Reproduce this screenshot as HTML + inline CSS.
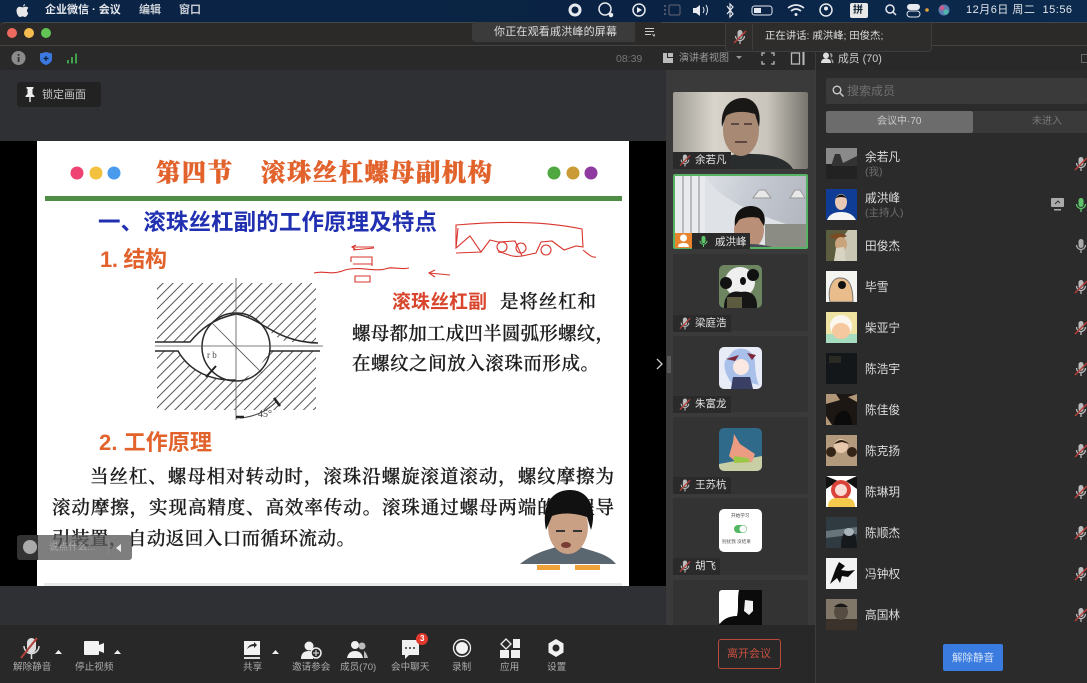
<!DOCTYPE html>
<html><head><meta charset="utf-8"><style>
*{box-sizing:border-box}html,body{margin:0;padding:0}
body{width:1087px;height:683px;overflow:hidden;position:relative;background:#282828;font-family:"Liberation Sans","Noto Sans CJK SC",sans-serif;color:#ddd}
.a{position:absolute}.t{position:absolute;white-space:nowrap;line-height:14px}
.tile{position:absolute;left:673px;width:135px;background:#333;border-radius:2px;overflow:hidden}
.tag{position:absolute;left:673px;height:17px;background:#2a2a2a}
.n{position:absolute;left:695px;font-size:10.5px;line-height:14px;color:#e2e2e2;white-space:nowrap}
.m{position:absolute;left:865px;font-size:11.7px;line-height:16px;color:#ddd;white-space:nowrap;margin-top:1px}
.s{position:absolute;left:865px;font-size:10.5px;line-height:13px;color:#6e6e6e;white-space:nowrap;margin-top:1px}
.av{position:absolute;left:826px;width:31px;height:31px;overflow:hidden}
.lb{position:absolute;top:661px;font-size:9.6px;line-height:13px;color:#aaa;white-space:nowrap}
</style></head><body>
<svg width="0" height="0" style="position:absolute"><defs>
<symbol id="mm" viewBox="0 0 14 16"><rect x="4.5" y="1" width="5" height="9" rx="2.5" fill="#bbb"/><path d="M2.5 7a4.5 4.5 0 0 0 9 0M7 11.5V15" stroke="#bbb" fill="none" stroke-width="1.3"/><path d="M1 14L13 2" stroke="#b8403c" stroke-width="1.5"/></symbol>
<symbol id="mu" viewBox="0 0 14 16"><rect x="4.5" y="1" width="5" height="9" rx="2.5" fill="currentColor"/><path d="M2.5 7a4.5 4.5 0 0 0 9 0M7 11.5V15" stroke="currentColor" fill="none" stroke-width="1.3"/></symbol>
<pattern id="hh" width="7" height="7" patternUnits="userSpaceOnUse" patternTransform="rotate(-45)"><rect width="7" height="1" fill="#555"/></pattern>
</defs></svg>

<!-- menu bar -->
<div class="a" style="left:0;top:0;width:1087px;height:22px;background:linear-gradient(90deg,#0b2546,#0a2344 60%,#0b2a4e)"></div>
<svg class="a" style="left:16px;top:3px" width="13" height="15" viewBox="0 0 13 15"><path d="M9 1C8 1.300 7 2.300 7 3.500 8.200 3.500 9.200 2.400 9 1ZM6.500 4.300C5.500 4.300 4.800 3.700 3.700 3.700 2 3.700.5 5.200.5 7.700c0 3 2 6.300 3.500 6.300.9 0 1.400-.6 2.500-.6s1.500.6 2.500.6c1.400 0 2.700-2.300 3.300-4-1.500-.7-2-3.900.2-5-.7-1-1.800-1.400-2.800-1.400-1.200 0-2 .7-2.700.7Z" fill="#e8e8e8"/></svg>
<div class="t" style="left:45px;top:3px;font-size:11px;font-weight:700;color:#e6e9ee">企业微信 · 会议</div>
<div class="t" style="left:139px;top:3px;font-size:11px;font-weight:700;color:#c9ced6">编辑</div>
<div class="t" style="left:179px;top:3px;font-size:11px;font-weight:700;color:#c9ced6">窗口</div>
<svg class="a" style="left:560px;top:0" width="400" height="22" fill="none" stroke="#e6e9ee" stroke-width="1.500">
<circle cx="15" cy="10" r="5" stroke-width="3"/>
<circle cx="45" cy="9" r="6"/><circle cx="51" cy="15" r="1.500" fill="#e6e9ee"/>
<circle cx="79" cy="10" r="6"/><path d="M77 7l5 3-5 3z" fill="#e6e9ee" stroke="none"/>
<rect x="109" y="5" width="11" height="10" rx="1.500" stroke="#667" stroke-width="1"/><path d="M104 6h2M104 10h2M104 14h2" stroke="#667"/>
<path d="M133 8h3l4-3v11l-4-3h-3z" fill="#e6e9ee" stroke="none"/><path d="M143 7q2 3 0 6M146 5q3 5 0 10" stroke-width="1"/>
<path d="M167 6l6 8-3 3V4l3 3-6 7" stroke-width="1.200"/>
<rect x="192" y="6" width="20" height="9" rx="2.500" stroke-width="1"/><rect x="194" y="8" width="7" height="5" fill="#e6e9ee" stroke="none"/>
<path d="M228 8q8-6 16 0M231 11q5-4 10 0" stroke-width="1.700"/><circle cx="236" cy="14.500" r="1.500" fill="#e6e9ee" stroke="none"/>
<circle cx="266" cy="10" r="6"/><circle cx="266" cy="8.500" r="2" fill="#e6e9ee" stroke="none"/>
<rect x="290" y="3" width="18" height="15" rx="2" fill="#e8e8e8" stroke="none"/>
<circle cx="330" cy="9" r="4"/><path d="M333 12l3 3"/>
<rect x="347" y="4" width="13" height="6" rx="3" fill="#e6e9ee" stroke="none"/><rect x="347" y="11" width="13" height="6" rx="3" stroke-width="1"/>
<circle cx="367" cy="10" r="1.800" fill="#e2a33a" stroke="none"/>
<circle cx="384" cy="10" r="5.500" fill="#5a7fb0" stroke="none"/><circle cx="382" cy="8" r="2.500" fill="#c75b8a" stroke="none"/><circle cx="386" cy="12" r="2.500" fill="#4fb7a8" stroke="none"/>
</svg>
<div class="t" style="left:853px;top:4px;font-size:10px;font-weight:700;color:#123">拼</div>
<div class="t" style="left:966px;top:3px;font-size:11px;color:#e2e6ec;letter-spacing:.5px">12月6日 周二&nbsp; 15:56</div>

<!-- window -->
<div class="a" style="left:0;top:22px;width:1087px;height:24px;background:#2c2a28;border-top:1px solid #43464a;border-bottom:1px solid #444;border-radius:6px 0 0 0"></div>
<div class="a" style="left:7px;top:28px;width:10px;height:10px;border-radius:5px;background:#ee6a5e"></div>
<div class="a" style="left:24px;top:28px;width:10px;height:10px;border-radius:5px;background:#f5bd4f"></div>
<div class="a" style="left:41px;top:28px;width:10px;height:10px;border-radius:5px;background:#61c454"></div>
<div class="a" style="left:472px;top:22px;width:163px;height:20px;background:#3b3b3b;border-radius:4px 0 0 4px"></div>
<div class="a" style="left:635px;top:22px;width:26px;height:20px;background:#2c2a28"></div>
<div class="t" style="left:494px;top:25px;font-size:11px;color:#dedede;letter-spacing:.2px">你正在观看戚洪峰的屏幕</div>
<svg class="a" style="left:644px;top:27px" width="11" height="10" stroke="#ccc" stroke-width="1"><path d="M1 1.500h9M1 4.500h9M1 7.500h6"/><path d="M8.500 7l1.500 2 1-2" /></svg>

<div class="a" style="left:0;top:46px;width:815px;height:24px;background:#292929"></div>
<div class="a" style="left:815px;top:46px;width:272px;height:24px;background:#292929"></div>
<svg class="a" style="left:11px;top:50px" width="50" height="16"><circle cx="7.500" cy="8" r="7" fill="#8b8b8b"/><rect x="6.700" y="7" width="1.800" height="5" fill="#333"/><rect x="6.700" y="4" width="1.800" height="1.800" fill="#333"/><path d="M35 2l6 1.500V9c0 3-3 5-6 6-3-1-6-3-6-6V3.500z" fill="#3b78e0"/><path d="M35 6v5M32.500 8.500h5" stroke="#123" stroke-width="1.200"/></svg>
<svg class="a" style="left:66px;top:52px" width="14" height="13" fill="#3fa14a"><rect x="1" y="8" width="2" height="3.500"/><rect x="5" y="5" width="2" height="6.500"/><rect x="9" y="1.500" width="2" height="10"/></svg>
<div class="t" style="left:616px;top:52px;font-size:10.5px;color:#777">08:39</div>
<svg class="a" style="left:662px;top:52px" width="12" height="12"><path d="M1 1h4v5h6v5H1z" fill="#bbb"/><rect x="6" y="1" width="5" height="4" fill="#bbb"/></svg>
<div class="t" style="left:679px;top:52px;font-size:10px;color:#9b9b9b">演讲者视图</div>
<div class="a" style="left:736px;top:56px;border:3px solid transparent;border-top:3px solid #999"></div>
<svg class="a" style="left:761px;top:52px" width="14" height="13" stroke="#bbb" fill="none" stroke-width="1.300"><path d="M1 4V1h3M10 1h3v3M13 9v3h-3M4 12H1V9"/></svg>
<svg class="a" style="left:790px;top:52px" width="16" height="13" stroke="#bbb" fill="none" stroke-width="1.300"><rect x="1.500" y="1" width="8" height="11"/><path d="M13.500 0v13" stroke-width="2"/></svg>
<div class="a" style="left:815px;top:46px;width:1px;height:637px;background:#3c3c3c"></div>
<svg class="a" style="left:821px;top:52px" width="13" height="12" fill="#ddd"><circle cx="5" cy="3.500" r="3"/><path d="M0 11c0-3 2-4.500 5-4.500s5 1.500 5 4.500z"/><path d="M9 1a2.500 2.500 0 0 1 0 5c2 .5 3.500 2 3.500 5H11" fill="#999"/></svg>
<div class="t" style="left:838px;top:52px;font-size:10.8px;color:#ccc">成员 (70)</div>
<div class="a" style="left:1081px;top:54px;width:6px;height:9px;border:1px solid #666;border-right:0"></div>

<!-- stage -->
<div class="a" style="left:0;top:70px;width:666px;height:555px;background:#2e3033"></div>
<div class="a" style="left:0;top:141px;width:666px;height:445px;background:#000"></div>
<div class="a" style="left:666px;top:70px;width:149px;height:555px;background:#3a3a3a"></div>
<div class="a" style="left:17px;top:82px;width:84px;height:25px;background:#222;border-radius:3px"></div>
<svg class="a" style="left:24px;top:86px" width="12" height="17" fill="#eee"><path d="M2.500 1h7v1.500L8.500 3v5l2 2v1H6.700v5h-1.400v-5H1.500v-1l2-2V3L2.500 2.500z"/></svg>
<div class="t" style="left:42px;top:88px;font-size:11px;color:#c8c8c8">锁定画面</div>

<!-- slide -->
<svg class="a" style="left:0;top:0;filter:blur(.35px)" width="666" height="683" viewBox="0 0 666 683" font-family="'Liberation Sans','Noto Sans CJK SC',sans-serif">
<rect x="37" y="141" width="592" height="445" fill="#fff"/>
<rect x="44" y="583" width="578" height="3" fill="#e8e8e8"/>
<g><circle cx="77" cy="173" r="6.500" fill="#ee4272"/><circle cx="96" cy="173" r="6.500" fill="#f2c23e"/><circle cx="114" cy="173" r="6.500" fill="#4a9aee"/><circle cx="554" cy="173" r="6.500" fill="#4fa83f"/><circle cx="573" cy="173" r="6.500" fill="#c99a35"/><circle cx="591" cy="173" r="6.500" fill="#8e3aa0"/></g>
<g font-family="'Liberation Serif','Noto Serif CJK SC',serif" font-weight="900" fill="#e2622c" stroke="#e2622c" stroke-width=".4" font-size="24.500">
<text x="156" y="181" textLength="76" lengthAdjust="spacing">第四节</text>
<text x="261" y="181" textLength="231" lengthAdjust="spacing">滚珠丝杠螺母副机构</text></g>
<rect x="45" y="196" width="577" height="5" fill="#4f8c45"/>
<text x="98" y="230" font-size="22.500" font-weight="700" fill="#2030b0" textLength="339" lengthAdjust="spacing">一、滚珠丝杠副的工作原理及特点</text>
<text x="100" y="267" font-size="22" font-weight="700" fill="#e2622c" textLength="67" lengthAdjust="spacing">1. 结构</text>
<text x="99" y="450" font-size="22" font-weight="700" fill="#e2622c" textLength="113" lengthAdjust="spacing">2. 工作原理</text>
<text x="392" y="308" font-size="18.800" font-weight="700" fill="#d8452c" textLength="95" lengthAdjust="spacing">滚珠丝杠副</text>
<g font-family="'Liberation Serif','Noto Serif CJK SC',serif" font-size="18.500" font-weight="500" fill="#1c1c1c" stroke="#1c1c1c" stroke-width=".3">
<text x="500" y="308" textLength="96" lengthAdjust="spacing">是将丝杠和</text>
<text x="352" y="340" textLength="262" lengthAdjust="spacing">螺母都加工成凹半圆弧形螺纹，</text>
<text x="352" y="370" textLength="247" lengthAdjust="spacing">在螺纹之间放入滚珠而形成。</text>
<text x="90" y="483" textLength="524" lengthAdjust="spacing">当丝杠、螺母相对转动时，滚珠沿螺旋滚道滚动，螺纹摩擦为</text>
<text x="52" y="514" textLength="562" lengthAdjust="spacing">滚动摩擦，实现高精度、高效率传动。滚珠通过螺母两端的回程导</text>
<text x="52" y="545" textLength="303" lengthAdjust="spacing">引装置，自动返回入口而循环流动。</text>
</g>
<!-- diagram -->
<path d="M157 283H316V342H290C275 342 262 318 236 314C212 318 200 330 190 342H157Z" fill="url(#hh)"/>
<path d="M157 351H178C190 372 212 381 236 380C255 378 262 362 270 351H316V410H157Z" fill="url(#hh)"/>
<g fill="none" stroke="#2a2a2a" stroke-width="1.500">
<path d="M155 342H190C200 330 212 319 236 314C262 318 275 342 318 343"/>
<path d="M155 351H178C190 372 212 381 236 380M270 351H320"/>
<circle cx="236" cy="347" r="34"/></g>
<path d="M236 278V420M155 346H323M212 323L262 373" stroke="#555" stroke-width=".8" fill="none"/>
<path d="M216 366L206 377" stroke="#222" stroke-width="2"/>
<path d="M240 418q22-2 36-16" stroke="#444" fill="none"/><path d="M236 417h8M274 398l6 8" stroke="#222" stroke-width="2.500"/>
<text x="258" y="417" font-size="10" fill="#444" font-family="'Liberation Serif',serif">45°</text>
<text x="207" y="358" font-size="9" fill="#444" font-family="'Liberation Serif',serif">r b</text>
<!-- scribbles -->
<g fill="none" stroke="#d9352c" stroke-width="1.100">
<path d="M456 225C490 222 540 220 582 229L583 247 576 246 564 250 552 241 541 242 536 253 522 256 515 241 498 242 490 240 481 252 470 236 456 248ZM456 248L458 228M481 252L456 253M522 256C510 258 505 252 498 252M583 250C588 254 592 258 596 257"/>
<circle cx="502" cy="247" r="5"/><circle cx="521" cy="248" r="5"/><circle cx="546" cy="250" r="5"/>
<path d="M314 273C325 270 330 276 345 270 360 266 375 272 385 269 392 266 400 270 409 268M353 247L374 247M356 245L352 247 356 250M353 250L374 248M351 262V257H372V266M353 264L372 264M355 276H370V282H355Z"/>
<path d="M429 273L450 275M435 270L429 273 435 277"/></g>
<!-- presenter -->
<path d="M520 564C535 552 548 550 556 547L580 547C595 552 608 554 616 564Z" fill="#5a6670"/>
<ellipse cx="568" cy="527" rx="20" ry="27" fill="#c9a084"/>
<path d="M546 530C541 505 552 490 570 490 590 490 597 510 591 530L587 517C575 513 562 512 552 516Z" fill="#111"/>
<path d="M556 531h9M573 531h9" stroke="#333" stroke-width="2"/><ellipse cx="566" cy="545" rx="5" ry="3" fill="#7a3d35"/>
<rect x="537" y="565" width="23" height="5" fill="#f0a23a"/><rect x="575" y="565" width="25" height="5" fill="#f0a23a"/>
</svg>

<!-- chat bar -->
<div class="a" style="left:17px;top:535px;width:21px;height:25px;background:#333;border-radius:3px 0 0 3px"></div>
<div class="a" style="left:38px;top:535px;width:94px;height:25px;background:rgba(90,90,90,.78);border-radius:0 3px 3px 0"></div>
<div class="a" style="left:23px;top:540px;width:14px;height:14px;border-radius:7px;background:#aaa"></div>
<div class="t" style="left:49px;top:541px;font-size:9.6px;color:#aaa">说点什么...</div>
<div class="a" style="left:108px;top:540px;width:1px;height:14px;background:#888"></div>
<div class="a" style="left:116px;top:544px;border:4px solid transparent;border-right:5px solid #eee;border-left:0"></div>

<svg class="a" style="left:655px;top:356px" width="18" height="20" stroke="#ccc" fill="none"><path d="M2 3l5 5-5 5" stroke-width="1.300"/><path d="M13 0v17M15 0v17" stroke="#777"/></svg>

<!-- tiles -->
<div class="tile" style="top:92px;height:77px;background:linear-gradient(90deg,#9f9c94,#d8d4cc 30%,#c9c5bc 70%,#77746d)">
<svg width="135" height="77"><path d="M30 77C45 66 60 60 80 62 100 62 115 68 120 77Z" fill="#2a2d2e"/><ellipse cx="68" cy="38" rx="18" ry="26" fill="#a88a74"/><path d="M49 35C47 15 58 6 70 6 82 6 89 18 86 35L82 22C70 18 58 20 53 24Z" fill="#1a1817"/><path d="M58 32h8M71 32h8M62 50h12" stroke="#433" stroke-width="1.500"/></svg></div>
<div class="tag" style="top:152px;width:58px"></div>
<svg class="a" style="left:679px;top:153px" width="12" height="15"><use href="#mm"/></svg><div class="n" style="top:153px">余若凡</div>

<div class="tile" style="top:174px;height:75px;border:2px solid #56b364;background:linear-gradient(110deg,#e9ecef,#c7ccd4 50%,#aeb3bc)">
<svg width="131" height="71" style="display:block"><path d="M0 0h30v71H0z" fill="#e8eaee"/><path d="M8 0v60M16 0v60M24 0v60" stroke="#aaa" stroke-width="1.500"/><path d="M30 0c20 30 60 40 100 55v16H30z" fill="#dfe2e6"/><path d="M78 22l6-8 6 0 6 8zM115 22l5-8 5 0 5 8z" fill="#e8e8e8" stroke="#999"/><rect x="90" y="48" width="41" height="23" fill="#8b8d85"/><ellipse cx="74" cy="54" rx="15" ry="19" fill="#b98f78"/><path d="M60 50C58 35 68 30 76 30 86 30 92 38 89 50L84 42C75 40 68 42 64 44Z" fill="#141211"/><path d="M55 71q20-6 42 0z" fill="#474c55"/></svg></div>
<div class="a" style="left:675px;top:233px;width:17px;height:15px;background:#e8832e"></div>
<svg class="a" style="left:677px;top:234px" width="13" height="13" fill="#fff"><circle cx="6.500" cy="4" r="3.500"/><path d="M1 13c0-3 2-4 5.500-4s5.500 1 5.500 4z"/></svg>
<div class="tag" style="top:233px;left:692px;width:58px;height:16px"></div>
<svg class="a" style="left:698px;top:235px;color:#5fc56c" width="11" height="13"><use href="#mu"/></svg><div class="n" style="top:235px;left:715px">戚洪峰</div>

<div class="tile" style="top:254px;height:77px"></div>
<div class="tile" style="top:336px;height:76px"></div>
<div class="tile" style="top:417px;height:77px"></div>
<div class="tile" style="top:498px;height:77px"></div>
<div class="tile" style="top:580px;height:45px"></div>

<svg class="a" style="left:719px;top:265px;border-radius:5px" width="43" height="43"><rect width="43" height="43" fill="#6d8560"/><circle cx="21" cy="17" r="15" fill="#efefef"/><circle cx="7" cy="18" r="6" fill="#111"/><circle cx="34" cy="10" r="6" fill="#111"/><ellipse cx="24" cy="16" rx="3" ry="4" fill="#111"/><path d="M5 43c0-14 8-18 17-16 10-2 17 4 16 16z" fill="#151515"/><rect x="8" y="32" width="15" height="11" fill="#5c5a3f"/></svg>
<svg class="a" style="left:719px;top:347px;border-radius:5px" width="43" height="42"><rect width="43" height="42" fill="#e8ecf6"/><path d="M14 4c10-6 22 0 22 12 0 9 2 18 4 22l-12-3-14 3C8 30 4 22 6 14z" fill="#a9c0ea"/><path d="M7 12L20 8 16 14zM28 6l9 2-4 5z" fill="#7c2a3a"/><ellipse cx="22" cy="20" rx="8" ry="8" fill="#fbe8e2"/><path d="M14 30h17l3 12H12z" fill="#3a3f66"/></svg>
<svg class="a" style="left:719px;top:428px;border-radius:5px" width="43" height="43"><rect width="43" height="43" fill="#2f6a8a"/><path d="M0 36l43-8v15H0z" fill="#c9cfa4"/><path d="M14 14L15 6 21 16 36 26 33 34 18 35 10 28z" fill="#ec9c82"/><path d="M15 28l14 2 2 4-16 1z" fill="#9bc746"/></svg>
<svg class="a" style="left:719px;top:509px;border-radius:5px" width="43" height="43" font-family="'Liberation Sans','Noto Sans CJK SC',sans-serif"><rect width="43" height="43" fill="#fff"/><text x="12" y="8" font-size="4.600" fill="#444">开始学习</text><rect x="15" y="16" width="13" height="8" rx="4" fill="#55b666"/><circle cx="24" cy="20" r="3.500" fill="#fff"/><text x="3" y="34" font-size="4.600" fill="#555">别扰我 没结果</text></svg>
<svg class="a" style="left:719px;top:590px" width="43" height="35"><rect width="43" height="35" rx="3" fill="#fff"/><path d="M20 0h23v35H0c4-6 10-9 18-9 2-8 0-18 2-26z" fill="#0b0b0b"/><path d="M26 10l8 1 0 10-4 4-5-4z" fill="#f2f2f2"/></svg>

<div class="tag" style="top:315px;width:58px"></div><svg class="a" style="left:679px;top:316px" width="12" height="15"><use href="#mm"/></svg><div class="n" style="top:316px">梁庭浩</div>
<div class="tag" style="top:396px;width:58px"></div><svg class="a" style="left:679px;top:397px" width="12" height="15"><use href="#mm"/></svg><div class="n" style="top:397px">朱富龙</div>
<div class="tag" style="top:477px;width:58px"></div><svg class="a" style="left:679px;top:478px" width="12" height="15"><use href="#mm"/></svg><div class="n" style="top:478px">王苏杭</div>
<div class="tag" style="top:558px;width:47px"></div><svg class="a" style="left:679px;top:559px" width="12" height="15"><use href="#mm"/></svg><div class="n" style="top:559px">胡飞</div>

<!-- bottom bar -->
<div class="a" style="left:0;top:625px;width:815px;height:58px;background:#282828;border-radius:0 0 0 6px"></div>
<svg class="a" style="left:0;top:625px" width="815" height="36">
<rect x="27" y="13" width="9" height="15" rx="4.500" fill="#ddd"/><path d="M24 21a7.500 7.500 0 0 0 15 0M31.500 28v6" stroke="#ddd" stroke-width="1.500" fill="none"/><path d="M21 33L37 13" stroke="#b0413b" stroke-width="2"/>
<path d="M55 29h7l-3.500-4zM114 29h7l-3.500-4zM272 29h7l-3.500-4z" fill="#eee"/>
<rect x="84" y="16" width="15" height="14" rx="1" fill="#f2f2f2"/><path d="M99 20l5-2v10l-5-2z" fill="#f2f2f2"/>
<rect x="244" y="16" width="16" height="14" fill="#f2f2f2"/><path d="M247 24q2-5 7-5v-2l3 3-3 3v-2q-4 0-7 3z" fill="#282828"/><rect x="244" y="32" width="16" height="2" fill="#ddd"/>
<circle cx="309" cy="21" r="4.500" fill="#f0f0f0"/><path d="M301 34c0-6 3-8 8-8 2 0 3 .5 4 1v7z" fill="#f0f0f0"/><circle cx="316" cy="28" r="5" fill="#282828" stroke="#f0f0f0" stroke-width="1.500"/><path d="M316 25v6M313 28h6" stroke="#f0f0f0"/>
<circle cx="355" cy="20" r="4" fill="#f0f0f0"/><circle cx="362" cy="21" r="3.500" fill="#bbb"/><path d="M347 33c1-5 4-7 8-7s7 2 8 7z" fill="#f0f0f0"/><path d="M364 26c2 1 3 4 4 7h-4z" fill="#bbb"/>
<path d="M402 15h17v15h-10l-4 4v-4h-3z" fill="#f0f0f0"/><circle cx="406" cy="23" r="1" fill="#333"/><circle cx="410" cy="23" r="1" fill="#333"/><circle cx="414" cy="23" r="1" fill="#333"/>
<circle cx="422" cy="14" r="6" fill="#e2392f"/>
<circle cx="462" cy="23" r="8.500" fill="none" stroke="#eee" stroke-width="1.300"/><circle cx="462" cy="23" r="6" fill="#f2f2f2"/>
<path d="M506 14l5 5-5 5-5-5z" fill="none" stroke="#f0f0f0" stroke-width="1.300"/><rect x="513" y="14" width="7" height="9" fill="#f0f0f0"/><rect x="500" y="25" width="9" height="8" fill="#f0f0f0"/><rect x="511" y="25" width="9" height="8" fill="#f0f0f0"/>
<path d="M556 14l7.500 4.500v9L556 32l-7.500-4.500v-9z" fill="#f2f2f2"/><circle cx="556" cy="23" r="3.500" fill="#282828"/>
</svg>
<div class="t" style="left:420px;top:633px;font-size:8px;font-weight:700;color:#fff;line-height:12px">3</div>
<div class="lb" style="left:13px">解除静音</div><div class="lb" style="left:75px">停止视频</div>
<div class="lb" style="left:243px">共享</div><div class="lb" style="left:292px">邀请参会</div><div class="lb" style="left:340px">成员(70)</div>
<div class="lb" style="left:391px">会中聊天</div><div class="lb" style="left:452px">录制</div><div class="lb" style="left:500px">应用</div><div class="lb" style="left:547px">设置</div>
<div class="a" style="left:718px;top:639px;width:63px;height:30px;border:1.500px solid #b84a3e;border-radius:3px"></div>
<div class="t" style="left:727px;top:647px;font-size:11px;color:#c9503f">离开会议</div>

<!-- members panel -->
<div class="a" style="left:816px;top:70px;width:271px;height:613px;background:#2b2b2b"></div>
<div class="a" style="left:826px;top:78px;width:261px;height:26px;background:#3a3a3a;border-radius:2px"></div>
<svg class="a" style="left:832px;top:85px" width="12" height="12" fill="none" stroke="#ccc" stroke-width="1.400"><circle cx="5" cy="5" r="3.800"/><path d="M8 8l3.500 3.500"/></svg>
<div class="t" style="left:847px;top:84px;font-size:12px;color:#6f6f6f">搜索成员</div>
<div class="a" style="left:826px;top:111px;width:147px;height:22px;background:#6c6c6c;border-radius:2px"></div>
<div class="a" style="left:973px;top:111px;width:114px;height:22px;background:#3a3a3a"></div>
<div class="t" style="left:877px;top:115px;font-size:10px;color:#c9c9c9">会议中·70</div>
<div class="t" style="left:1032px;top:115px;font-size:10px;color:#777">未进入</div>

<svg class="av" style="top:148px" viewBox="0 0 31 31"><rect width="31" height="16" fill="#8a8a8a"/><rect y="16" width="31" height="15" fill="#222"/><path d="M5 18l4-12 5 0 3 9 14-7v10z" fill="#333"/></svg>
<svg class="av" style="top:189px" viewBox="0 0 31 31"><rect width="31" height="31" fill="#0f3c94"/><ellipse cx="15" cy="13" rx="6" ry="8" fill="#e9c8b4"/><path d="M9 10q6-9 12 0l-1-1q-5-2-10 0z" fill="#111"/><path d="M1 31q3-8 14-8t15 8z" fill="#f5f5f5"/></svg>
<svg class="av" style="top:230px" viewBox="0 0 31 31"><rect width="31" height="31" fill="#c9c6b4"/><path d="M0 0h22L15 10 8 31H0z" fill="#5c5d3f"/><path d="M3 7q8-7 18-1l-8 4z" fill="#7a4a22"/><ellipse cx="15" cy="14" rx="6" ry="7" fill="#c9a47c"/><path d="M10 18l8-1 2 14H8z" fill="#d9d4c2"/></svg>
<svg class="av" style="top:271px" viewBox="0 0 31 31"><rect width="31" height="31" fill="#f4f4f0"/><path d="M4 31C1 16 7 6 15 7c8 0 12 8 12 24z" fill="#e9bc8c" stroke="#777"/><circle cx="16" cy="14" r="4" fill="#111"/></svg>
<svg class="av" style="top:312px" viewBox="0 0 31 31"><rect width="31" height="31" fill="#eee3a0"/><rect y="22" width="31" height="9" fill="#a6dcc0"/><circle cx="15" cy="14" r="11" fill="#fbf6ee"/><ellipse cx="15" cy="19" rx="9" ry="8" fill="#f6c8a0"/></svg>
<svg class="av" style="top:353px" viewBox="0 0 31 31"><rect width="31" height="31" fill="#14171a"/><rect x="3" y="3" width="12" height="7" fill="#2a2a24"/></svg>
<svg class="av" style="top:394px" viewBox="0 0 31 31"><rect width="31" height="31" fill="#1d1714"/><path d="M0 0h10l4 6-14 4zM22 3l9-3v8zM0 22l6 9H0z" fill="#b29678"/><path d="M8 31c0-10 5-14 10-14s8 6 8 14z" fill="#0b0b0b"/></svg>
<svg class="av" style="top:435px" viewBox="0 0 31 31"><rect width="31" height="31" fill="#b39a7c"/><circle cx="15" cy="11" r="7" fill="#e7c8ad"/><circle cx="5" cy="17" r="5" fill="#342418"/><circle cx="26" cy="17" r="5" fill="#342418"/><path d="M8 9q7-8 15 0l-7-2z" fill="#342418"/></svg>
<svg class="av" style="top:476px" viewBox="0 0 31 31"><rect width="31" height="31" fill="#fff"/><path d="M0 0l12 5L0 13zM31 0L20 5l11 8z" fill="#111"/><circle cx="15" cy="14" r="10" fill="#d9443a"/><circle cx="15" cy="14" r="6" fill="#fbdcd5"/><path d="M2 31c0-7 4-9 9-9h9c6 0 9 3 9 9z" fill="#f5c94c"/></svg>
<svg class="av" style="top:517px" viewBox="0 0 31 31"><rect width="31" height="31" fill="#2f3b40"/><path d="M0 14l31-4v7L0 21z" fill="#67757a"/><path d="M15 31c0-8 1-17 8-17s8 9 8 17z" fill="#16191b"/><ellipse cx="23" cy="15" rx="5" ry="4" fill="#a9b4ba"/></svg>
<svg class="av" style="top:558px" viewBox="0 0 31 31"><rect width="31" height="31" fill="#f3f3f3"/><path d="M4 26L10 10 13 4 19 8 15 12 22 13 29 12 22 19 16 18 14 25 11 20z" fill="#0d0d0d"/></svg>
<svg class="av" style="top:599px" viewBox="0 0 31 31"><rect width="31" height="31" fill="#807768"/><rect y="20" width="31" height="11" fill="#3a322b"/><ellipse cx="15" cy="13" rx="7" ry="8" fill="#564c42"/><path d="M8 8q7-7 14 0z" fill="#181818"/></svg>

<div class="m" style="top:149px">余若凡</div><div class="s" style="top:165px">(我)</div>
<div class="m" style="top:190px">戚洪峰</div><div class="s" style="top:206px">(主持人)</div>
<div class="m" style="top:238px">田俊杰</div><div class="m" style="top:279px">毕雪</div><div class="m" style="top:320px">柴亚宁</div>
<div class="m" style="top:361px">陈浩宇</div><div class="m" style="top:402px">陈佳俊</div><div class="m" style="top:443px">陈克扬</div>
<div class="m" style="top:484px">陈琳玥</div><div class="m" style="top:525px">陈顺杰</div><div class="m" style="top:566px">冯钟权</div><div class="m" style="top:607px">高国林</div>

<svg class="a" style="left:1074px;top:156px" width="14" height="16"><use href="#mm"/></svg>
<svg class="a" style="left:1074px;top:197px;color:#5fc56c" width="14" height="16"><use href="#mu"/></svg>
<svg class="a" style="left:1051px;top:198px" width="13" height="13"><rect x="0" y="0" width="13" height="9" rx="1" fill="#aaa"/><rect x="3" y="11" width="7" height="1.500" fill="#aaa"/><path d="M4 6l3-3 2 2" stroke="#333" fill="none"/></svg>
<svg class="a" style="left:1074px;top:238px;color:#aaa" width="14" height="16"><use href="#mu"/></svg>
<svg class="a" style="left:1074px;top:279px" width="14" height="16"><use href="#mm"/></svg>
<svg class="a" style="left:1074px;top:320px" width="14" height="16"><use href="#mm"/></svg>
<svg class="a" style="left:1074px;top:361px" width="14" height="16"><use href="#mm"/></svg>
<svg class="a" style="left:1074px;top:402px" width="14" height="16"><use href="#mm"/></svg>
<svg class="a" style="left:1074px;top:443px" width="14" height="16"><use href="#mm"/></svg>
<svg class="a" style="left:1074px;top:484px" width="14" height="16"><use href="#mm"/></svg>
<svg class="a" style="left:1074px;top:525px" width="14" height="16"><use href="#mm"/></svg>
<svg class="a" style="left:1074px;top:566px" width="14" height="16"><use href="#mm"/></svg>
<svg class="a" style="left:1074px;top:607px" width="14" height="16"><use href="#mm"/></svg>

<div class="a" style="left:943px;top:644px;width:60px;height:27px;background:#3a7bdf;border-radius:2px"></div>
<div class="t" style="left:952px;top:651px;font-size:10.5px;color:#d5e3f7">解除静音</div>

<!-- speaker popup -->
<div class="a" style="left:725px;top:22px;width:207px;height:30px;background:#2e2d2c;border:1px solid #3e3e3e;border-radius:0 0 4px 4px"></div>
<svg class="a" style="left:733px;top:29px" width="14" height="16"><use href="#mm"/></svg>
<div class="a" style="left:752px;top:24px;width:1px;height:26px;background:#3e3e3e"></div>
<div class="t" style="left:765px;top:30px;font-size:10.4px;color:#ddd">正在讲话: 戚洪峰; 田俊杰;</div>
</body></html>
